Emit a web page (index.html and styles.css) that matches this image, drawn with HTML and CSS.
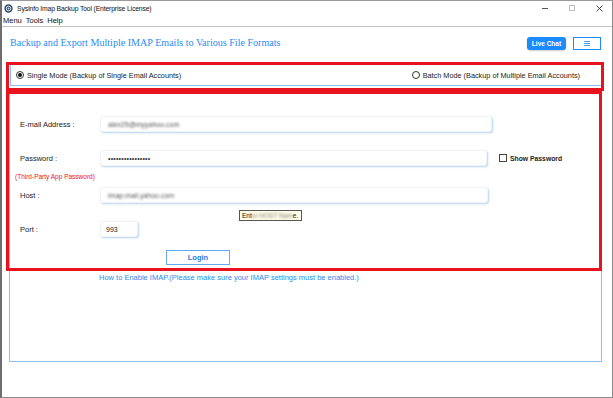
FILE: index.html
```html
<!DOCTYPE html>
<html>
<head>
<meta charset="utf-8">
<link rel="stylesheet" href="styles.css">
</head>
<body>
<div class="window">
  <div class="titlebar">
    <svg class="appicon" width="9" height="9" viewBox="0 0 10 10"><circle cx="5" cy="5" r="4.6" fill="#2f4a6b"/><circle cx="5" cy="5" r="2.6" fill="none" stroke="#d9e4f0" stroke-width="1.1"/><circle cx="5" cy="5" r="1" fill="#d9e4f0"/></svg>
    <span class="title">SysInfo Imap Backup Tool (Enterprise License)</span>
    <div class="controls">
      <span class="ctl min"></span>
      <span class="ctl max"></span>
      <svg class="ctl close" width="7" height="7" viewBox="0 0 7 7"><path d="M0.5 0.5L6.5 6.5M6.5 0.5L0.5 6.5" stroke="#333" stroke-width="0.9"/></svg>
    </div>
  </div>
  <div class="menubar">
    <span>Menu</span><span>Tools</span><span>Help</span>
  </div>
  <div class="header">
    <h1 class="headline">Backup and Export Multiple IMAP Emails to Various File Formats</h1>
    <div class="header-actions">
      <button class="livechat">Live Chat</button>
      <button class="hamburger"><span></span><span></span><span></span></button>
    </div>
  </div>
  <div class="modebox">
    <label class="radio"><span class="dot checked"></span>Single Mode (Backup of Single Email Accounts)</label>
    <label class="radio"><span class="dot"></span>Batch Mode (Backup of Multiple Email Accounts)</label>
  </div>
  <div class="panel">
    <div class="row r-email">
      <span class="label">E-mail Address :</span>
      <div class="input w-email"><span class="blur">alex25@myyahoo.com</span></div>
    </div>
    <div class="row r-pass">
      <span class="label">Password :</span>
      <div class="input w-pass"><span class="dots">••••••••••••••••</span></div>
      <label class="showpass"><span class="box"></span>Show Password</label>
    </div>
    <div class="hint">(Third-Party App Password)</div>
    <div class="row r-host">
      <span class="label">Host :</span>
      <div class="input w-host"><span class="blur">imap.mail.yahoo.com</span></div>
      <div class="tooltip">Ent<span class="blur">er HOST Nam</span>e.</div>
    </div>
    <div class="row r-port">
      <span class="label">Port :</span>
      <div class="input w-port"><span>993</span></div>
    </div>
    <div class="loginrow"><button class="login">Login</button></div>
    <div class="howto">How to Enable IMAP.(Please make sure your IMAP settings must be enabled.)</div>
  </div>
  <div class="redbox rb-mode"></div>
  <div class="redbox rb-form"></div>
</div>
</body>
</html>
```
FILE: styles.css
```css
* { box-sizing: border-box; }
html, body { margin: 0; padding: 0; background: #fff; }
body { font-family: "Liberation Sans", Arial, sans-serif; color: #222; }
.window {
  position: relative;
  width: 613px;
  height: 398px;
  border-left: 2px solid #6e6e6e;
  border-right: 1px solid #8a8a8a;
  border-bottom: 1px solid #8a8a8a;
  border-top: 1px solid #9a9a9a;
  background: #fff;
  overflow: hidden;
}
.titlebar {
  height: 14px;
  display: flex;
  align-items: center;
  padding-left: 2px;
}
.appicon { margin-right: 4px; }
.title { font-size: 6.8px; letter-spacing: -0.15px; color: #111; }
.controls { margin-left: auto; display: flex; align-items: center; height: 14px; }
.ctl { display: block; }
.min { width: 6px; height: 1px; background: #555; margin-right: 21px; }
.max { width: 6px; height: 6px; border: 1px solid #bdbdbd; margin-right: 21px; }
.close { margin-right: 9px; }
.menubar {
  height: 12px;
  display: flex;
  align-items: center;
  gap: 4px;
  padding-left: 1px;
  font-size: 7.5px;
  color: #111;
  border-bottom: 1px solid #c4c4c4;
}
.header {
  height: 34px;
  display: flex;
  align-items: center;
  padding: 0 11px 3px 8px;
}
.headline {
  margin: 0;
  font-family: "Liberation Serif", "Times New Roman", serif;
  font-weight: normal;
  font-size: 10.1px;
  color: #2b8cf2;
}
.header-actions { margin-left: auto; display: flex; gap: 7px; align-items: center; padding-top: 2px; }
.livechat {
  width: 39px; height: 13px;
  border: none; border-radius: 3px;
  background: #1a8cff; color: #fff;
  font-family: "Liberation Sans", Arial, sans-serif;
  font-weight: bold; font-size: 6.5px;
  padding: 0;
  box-shadow: 0 1px 2px rgba(0,0,0,0.2);
}
.hamburger {
  width: 28px; height: 13px;
  border: 1px solid #1a8cff; background: #fff;
  padding: 0;
  display: flex; flex-direction: column; align-items: center; justify-content: center; gap: 1px;
}
.hamburger span { display: block; width: 6px; height: 1px; background: #4c9ef5; }
.modebox {
  margin: 3px 9px 0 8px;
  height: 22px;
  border: 1px solid #8cbef2;
  display: flex;
  align-items: center;
  justify-content: space-between;
  padding: 0 22px 0 5px;
  font-size: 7.3px;
  color: #222;
}
.radio { display: flex; align-items: center; gap: 3px; }
.dot {
  width: 8px; height: 8px; border-radius: 50%;
  border: 1px solid #333; background: #fff;
  display: flex; align-items: center; justify-content: center;
}
.dot.checked::after { content: ""; width: 4px; height: 4px; border-radius: 50%; background: #111; }
.panel {
  position: relative;
  margin: 4px 10px 0 7px;
  height: 272px;
  border: 1px solid #8cbef2;
  padding: 25px 0 0 10px;
  font-size: 7.5px;
}
.row { position: relative; display: flex; align-items: center; height: 16px; }
.label { width: 80px; color: #222; }
.input {
  height: 16px;
  background: #fff;
  border-radius: 3px;
  border: 1px solid #f1f3f6;
  box-shadow: 1px 1px 2px rgba(90,155,230,0.45);
  display: flex; align-items: center;
  padding-left: 7px;
  font-size: 7px;
  color: #222;
}
.w-email { width: 392px; }
.w-pass { width: 387px; }
.w-host { width: 388px; }
.w-port { width: 38px; padding-left: 5px; }
.blur { filter: blur(1px); color: #555; }
.dots { font-size: 7px; letter-spacing: 0.2px; color: #333; }
.r-pass { margin-top: 18px; }
.showpass {
  display: flex; align-items: center; gap: 3px;
  margin-left: 12px;
  font-weight: bold; font-size: 6.8px; color: #222;
}
.box { width: 8px; height: 8px; border: 1px solid #444; background: #fff; }
.hint { margin: 6px 0 0 -5px; height: 10px; line-height: 10px; font-size: 6.5px; color: #e8141f; }
.r-host { margin-top: 5px; }
.tooltip {
  position: absolute;
  left: 219px; top: 23px;
  height: 11px;
  width: 63px;
  padding: 0 2px;
  background: #fffde6;
  border: 1px solid #555;
  font-size: 6.5px;
  line-height: 9px;
  color: #111;
  white-space: nowrap;
  overflow: hidden;
}
.tooltip .blur { color: #888; }
.r-port { margin-top: 18px; }
.loginrow { padding-left: 146px; margin-top: 13px; }
.login {
  width: 64px; height: 15px;
  background: #fff;
  border: 1px solid #64aaf2;
  color: #1a7ee6;
  font-family: "Liberation Sans", Arial, sans-serif;
  font-weight: bold; font-size: 7.5px;
  padding: 0;
}
.howto { margin: 8px 0 0 79px; font-size: 7.5px; color: #2b8cf2; }
.redbox {
  position: absolute;
  border: 3px solid #e8131f;
  pointer-events: none;
}
.rb-mode { left: 4px; top: 61px; width: 598px; height: 29px; }
.rb-form { left: 4px; top: 90px; width: 596px; height: 180px; }
```
